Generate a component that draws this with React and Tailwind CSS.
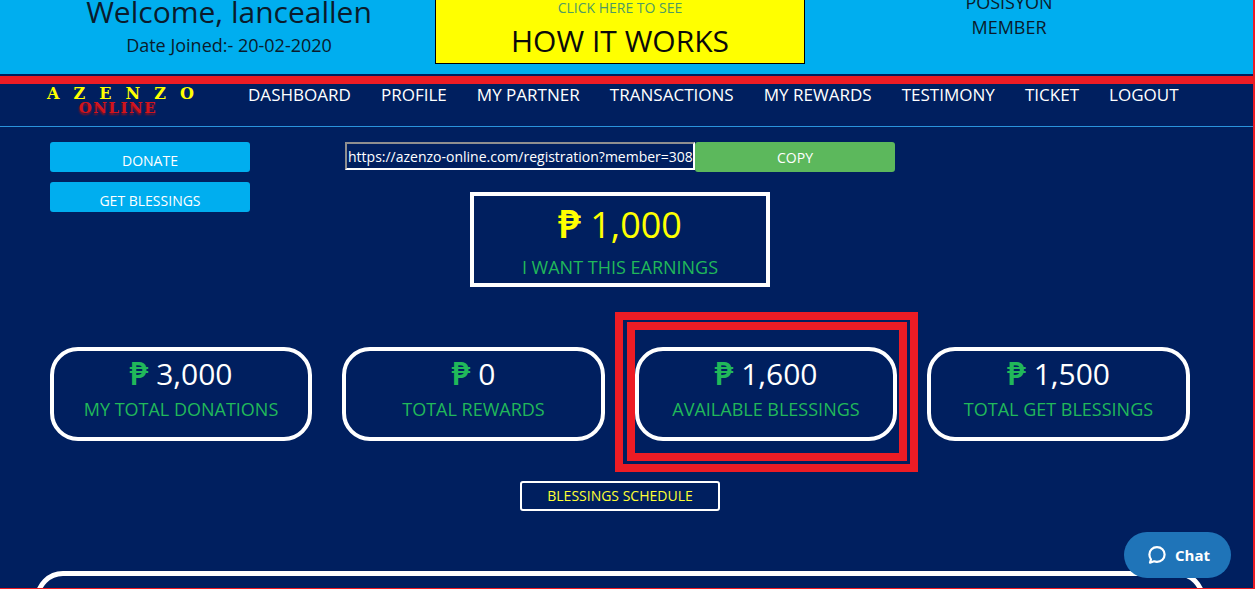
import React from "react";

const font = { fontFamily: '"Open Sans", sans-serif' };
const pesoFont = { fontFamily: '"Noto Sans", "DejaVu Sans", sans-serif' };

function Stat({ value, label, highlight }) {
  return (
    <div className="relative">
      {highlight && (
        <div className="absolute -left-[20px] -right-[21px] -top-[35px] -bottom-[31px] border-[8px] border-[#ed1c24] pt-[2px] pl-[4px] pr-[3px] pb-[3px]">
          <div className="w-full h-full border-[8px] border-[#ed1c24]" />
        </div>
      )}
      <div className="relative h-[94px] rounded-[28px] border-[4px] border-white flex flex-col items-center pt-[2px]">
        <div className="text-[30px] leading-[41px] text-white whitespace-nowrap">
          <span style={pesoFont} className="text-[#21b85a] text-[33px] leading-[0] font-semibold">₱</span> {value}
        </div>
        <div className="text-[18px] leading-[25px] mt-[3px] text-[#21b85a]">{label}</div>
      </div>
    </div>
  );
}

export default function App() {
  const nav = ["DASHBOARD", "PROFILE", "MY PARTNER", "TRANSACTIONS", "MY REWARDS", "TESTIMONY", "TICKET", "LOGOUT"];
  return (
    <div style={font} className="relative h-[589px] w-[1255px] overflow-hidden bg-[#001f5f] border-r-[2px] border-b-[1px] border-[#ed1c24]">
      <header className="h-[74px] bg-[#00aeef] flex overflow-hidden text-[#0a1b2c]">
        <div className="w-[435px] shrink-0 -mt-[10px] pl-[23px] text-center">
          <div className="text-[30px] leading-[41px] pt-[1px]">Welcome, lanceallen</div>
          <div className="text-[18px] leading-[25px] mt-[1px]">Date Joined:- 20-02-2020</div>
        </div>
        <div className="w-[370px] h-[64px] shrink-0 bg-[#ffff00] border border-black border-t-0 text-center">
          <div className="text-[14px] leading-[16px] text-[#4f9a63]">CLICK HERE TO SEE</div>
          <div className="text-[30px] leading-[40px] mt-[5px] text-[#0a0a0a]">HOW IT WORKS</div>
        </div>
        <div className="flex-1 -mt-[10px] pl-[30px] pr-[70px] text-center text-[18px] leading-[25px]">
          <div>POSISYON</div>
          <div>MEMBER</div>
        </div>
      </header>
      <div className="h-[2px] bg-[#001f5f]" />
      <div className="h-[8px] bg-[#ed1c24]" />
      <nav className="h-[43px] border-b border-[#2a93dc] flex items-start pl-[47px] relative">
        <div className="w-[201px] shrink-0 pt-[3px]" style={{ fontFamily: '"DejaVu Serif", serif' }}>
          <div className="w-[150px] text-[16px] leading-[14px] text-[#ffff00] font-bold tracking-[0.88em] whitespace-nowrap">AZENZO</div>
          <div className="w-[142px] text-center text-[15px] leading-[14px] text-[#d2141c] font-bold tracking-[1.5px] whitespace-nowrap [text-shadow:0_2px_2px_#8a1020]">ONLINE</div>
        </div>
        <div className="flex gap-[30px] text-white text-[17.05px] leading-[22px]">
          {nav.map((n) => (
            <span key={n} className="whitespace-nowrap">{n}</span>
          ))}
        </div>
      </nav>
      <main className="pl-[50px] pr-[63px]">
        <div className="flex pt-[15px]">
          <div className="w-[200px] shrink-0 flex flex-col gap-[10px]">
            <div className="h-[30px] rounded-[3px] bg-[#00aeef] text-white text-[14px] leading-[18px] pt-[10px] text-center">DONATE</div>
            <div className="h-[30px] rounded-[3px] bg-[#00aeef] text-white text-[14px] leading-[18px] pt-[10px] text-center">GET BLESSINGS</div>
          </div>
          <div className="ml-[95px] flex flex-col items-start">
            <div className="flex items-start">
              <div className="w-[350px] h-[28px] border-[2px] border-t-[#8f8f8f] border-l-[#8f8f8f] border-r-white border-b-white text-white text-[14px] leading-[25px] pl-[1px] overflow-hidden whitespace-nowrap">
                https://azenzo-online.com/registration?member=308
              </div>
              <div className="w-[200px] h-[30px] rounded-[3px] bg-[#5cb85c] text-white text-[14px] leading-[31px] text-center">COPY</div>
            </div>
            <div className="ml-[125px] mt-[20px] w-[300px] h-[95px] border-[4px] border-white text-center">
              <div className="text-[36px] leading-[49px] mt-[4px] text-[#ffff00] whitespace-nowrap"><span style={pesoFont} className="text-[40px] leading-[0] font-semibold">₱</span> 1,000</div>
              <div className="text-[18px] leading-[25px] mt-[6px] text-[#21b85a]">I WANT THIS EARNINGS</div>
            </div>
          </div>
        </div>
        <div className="grid grid-cols-[262px_263px_262px_263px] gap-[30px] mt-[60px]">
          <Stat value="3,000" label="MY TOTAL DONATIONS" />
          <Stat value="0" label="TOTAL REWARDS" />
          <Stat value="1,600" label="AVAILABLE BLESSINGS" highlight />
          <Stat value="1,500" label="TOTAL GET BLESSINGS" />
        </div>
        <div className="ml-[470px] mt-[40px] w-[200px] h-[30px] rounded-[3px] border-[2px] border-white text-[#ffff33] text-[14px] leading-[26px] text-center">
          BLESSINGS SCHEDULE
        </div>
      </main>
      <div className="ml-[35px] mt-[60px] w-[1170px] h-[60px] rounded-[28px] border-[5px] border-white" />
      <div className="absolute left-[1124px] top-[532px] w-[107px] h-[46px] rounded-[23px] bg-[#1f74b8] flex items-center justify-center gap-[8px] pl-[2px] text-white text-[15px] font-bold">
        <svg width="20" height="20" viewBox="0 0 20 20" fill="none" stroke="white" strokeWidth="2.2">
          <path d="M10 2.2c4.3 0 7.6 3.2 7.6 7.3s-3.3 7.3-7.6 7.3c-1 0-2-.2-2.9-.5L3 17.6l1-3.3C3 13 2.4 11.3 2.4 9.5 2.4 5.4 5.7 2.2 10 2.2z" strokeLinejoin="round" />
        </svg>
        <span>Chat</span>
      </div>
    </div>
  );
}
